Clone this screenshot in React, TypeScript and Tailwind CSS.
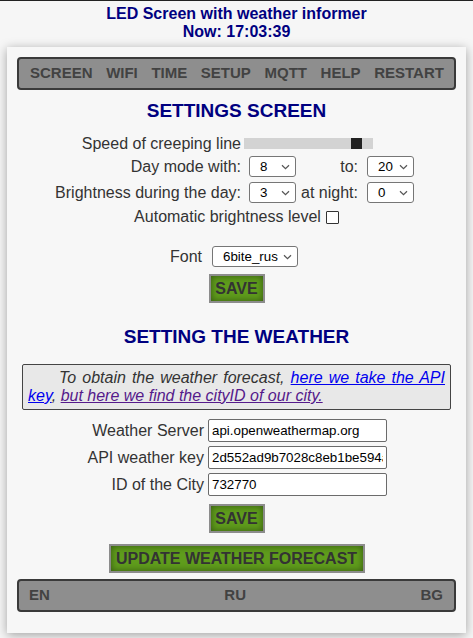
import React from 'react';

const navItems = ['SCREEN', 'WIFI', 'TIME', 'SETUP', 'MQTT', 'HELP', 'RESTART'];

const Chevron = () => (
  <svg width="9" height="6" viewBox="0 0 9 6" className="shrink-0">
    <path d="M1 1.2 L4.5 4.6 L8 1.2" fill="none" stroke="#555" strokeWidth="1.2" />
  </svg>
);

const FakeSelect = ({ value, className }: { value: string; className: string }) => (
  <div
    className={`h-[21px] flex items-center justify-between pl-[10px] pr-[5px] bg-white border border-[#767676] rounded-[3px] text-[13.33px] text-black ${className}`}
  >
    <span>{value}</span>
    <Chevron />
  </div>
);

const GreenButton = ({ label, className }: { label: string; className: string }) => (
  <button
    className={`h-[29px] flex items-center justify-center bg-[#5f9c1c] border-2 border-[#8c8c8c] shadow-[inset_0_0_7px_rgba(0,0,0,0.45)] text-[16px] font-bold text-[#333] ${className}`}
  >
    {label}
  </button>
);

const Field = ({ label, value }: { label: string; value: string }) => (
  <div className="flex items-center h-[23px]">
    <div className="w-[187px] text-right text-[16px] leading-[18px]">{label}</div>
    <input
      readOnly
      value={value}
      className="ml-[4px] w-[179px] h-[23px] px-[3px] bg-white border border-[#6b6b6b] rounded-[2px] text-[13.33px] text-black outline-none"
    />
  </div>
);

export default function App() {
  return (
    <div className="min-h-screen bg-[#f6f6f6] border-t border-[#222] font-['Liberation_Sans',Arial,sans-serif] text-[#333]">
      <div className="pt-[4px] text-center font-bold text-[16px] leading-[18px] text-[#000080]">
        <div>LED Screen with weather informer</div>
        <div>Now: 17:03:39</div>
      </div>

      <div className="mx-[7px] mt-[6px] bg-[#f7f7f7] shadow-[0_2px_10px_rgba(0,0,0,0.35)] px-[10px] pt-[10px] pb-[21px]">
        <nav className="h-[33px] flex items-center justify-between pl-[11px] pr-[10px] bg-[#8e8e8e] border-2 border-[#3a3a3a] rounded-[4px] text-[15px] font-bold text-[#424242]">
          {navItems.map((item) => (
            <span key={item}>{item}</span>
          ))}
        </nav>

        <h2 className="mt-[10px] text-center text-[19px] leading-[22px] font-bold text-[#000080]">
          SETTINGS SCREEN
        </h2>

        <div className="text-[16px] leading-[18px]">
          <div className="mt-[11px] h-[21px] flex items-center">
            <div className="w-[224px] text-right">Speed of creeping line</div>
            <div className="relative ml-[3px] w-[129px] h-[11px] bg-[#d3d3d3]">
              <div className="absolute left-[107px] top-0 w-[11px] h-[11px] bg-[#222]" />
            </div>
          </div>

          <div className="mt-[2px] h-[21px] flex items-center">
            <div className="w-[224px] text-right">Day mode with:</div>
            <FakeSelect value="8" className="ml-[8px] w-[47px]" />
            <div className="w-[62px] text-right">to:</div>
            <FakeSelect value="20" className="ml-[9px] w-[47px]" />
          </div>

          <div className="mt-[5px] h-[21px] flex items-center">
            <div className="w-[224px] text-right">Brightness during the day:</div>
            <FakeSelect value="3" className="ml-[8px] w-[47px]" />
            <div className="w-[62px] text-right">at night:</div>
            <FakeSelect value="0" className="ml-[9px] w-[47px]" />
          </div>

          <div className="mt-[5px] h-[18px] flex items-center justify-center">
            <span>Automatic brightness level</span>
            <span className="ml-[5px] w-[13px] h-[13px] bg-white border border-[#333] rounded-[1px]" />
          </div>

          <div className="mt-[20px] h-[21px] flex items-center justify-center pr-[5px]">
            <span>Font</span>
            <FakeSelect value="6bite_rus" className="ml-[10px] w-[86px]" />
          </div>
        </div>

        <div className="mt-[7px] flex justify-center">
          <GreenButton label="SAVE" className="w-[56px]" />
        </div>

        <h2 className="mt-[23px] text-center text-[19px] leading-[22px] font-bold text-[#000080]">
          SETTING THE WEATHER
        </h2>

        <div className="mt-[16px] mx-[5px] px-[5px] py-[4px] bg-[#e8e8e8] border border-[#444] rounded-[2px] text-[16px] leading-[18px] italic text-justify indent-[31px]">
          To obtain the weather forecast,{' '}
          <a className="text-[#0000ee] underline" href="#">
            here we take the API key
          </a>
          ,{' '}
          <a className="text-[#551a8b] underline" href="#">
            but here we find the cityID of our city.
          </a>
        </div>

        <div className="mt-[9px] flex flex-col gap-[4px]">
          <Field label="Weather Server" value="api.openweathermap.org" />
          <Field label="API weather key" value="2d552ad9b7028c8eb1be594a1c3e0f77" />
          <Field label="ID of the City" value="732770" />
        </div>

        <div className="mt-[8px] flex justify-center">
          <GreenButton label="SAVE" className="w-[56px]" />
        </div>

        <div className="mt-[11px] flex justify-center">
          <GreenButton label="UPDATE WEATHER FORECAST" className="w-[256px]" />
        </div>

        <div className="mt-[6px] h-[33px] flex items-center justify-between pl-[10px] pr-[11px] bg-[#8e8e8e] border-2 border-[#3a3a3a] rounded-[4px] text-[15px] font-bold text-[#424242]">
          <span>EN</span>
          <span>RU</span>
          <span>BG</span>
        </div>
      </div>
    </div>
  );
}
